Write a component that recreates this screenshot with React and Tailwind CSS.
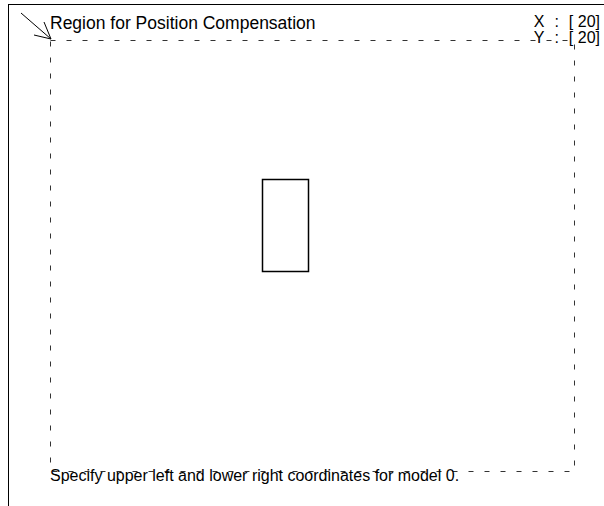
export default function App() {
  return (
    <div className="relative h-[506px] w-[604px] bg-white pt-1 pl-2 font-['Liberation_Sans',Arial,sans-serif] text-black">
      {/* canvas drawing: pointer arrow, search region, model box */}
      <svg className="absolute left-0 top-0" width="604" height="506" viewBox="0 0 604 506">
        <g stroke="#000" fill="none" strokeWidth="1">
          <line x1="21" y1="13" x2="51" y2="39" />
          <line x1="34" y1="35" x2="51" y2="39" />
          <line x1="44" y1="22" x2="51" y2="39" />
        </g>
        <rect
          x="50.5"
          y="40.5"
          width="524"
          height="431"
          fill="none"
          stroke="#333"
          strokeWidth="1"
          strokeDasharray="5 11"
        />
        <rect x="262.5" y="179.5" width="46" height="92" fill="none" stroke="#000" strokeWidth="1.5" />
      </svg>

      <div className="relative flex h-full flex-col border-l border-t border-black">
        <div className="flex items-start justify-between pl-[41px] pr-1 pt-[9px]">
          <span className="text-[17.5px] leading-[18px]">Region for Position Compensation</span>
          <div className="flex flex-col text-[16px] leading-[16px]">
            <div className="flex gap-[10px]">
              <span>X</span>
              <span>:</span>
              <span>[ 20]</span>
            </div>
            <div className="flex gap-[10px]">
              <span>Y</span>
              <span>:</span>
              <span>[ 20]</span>
            </div>
          </div>
        </div>
        <div className="mt-auto pb-[21px] pl-[41px] text-[16px] leading-[18px]">
          Specify upper left and lower right coordinates for model 0.
        </div>
      </div>
    </div>
  );
}
